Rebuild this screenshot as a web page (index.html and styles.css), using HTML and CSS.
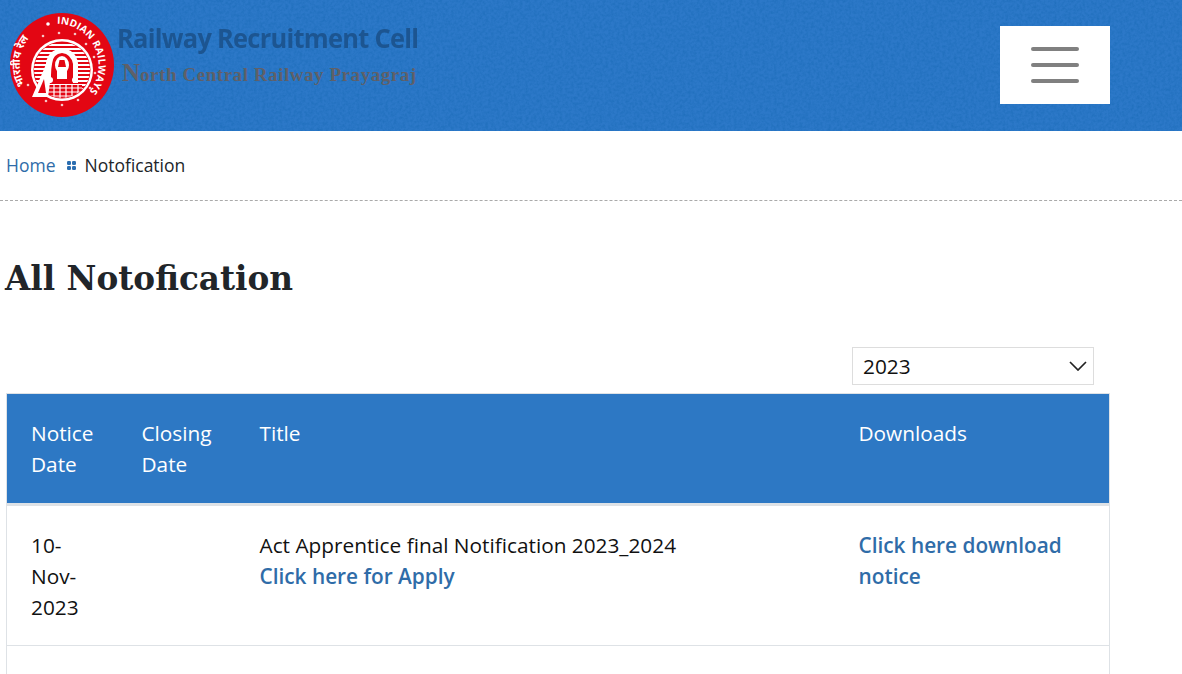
FILE: index.html
```html
<!DOCTYPE html>
<html lang="en">
<head>
    <meta charset="UTF-8">
    <meta name="viewport" content="width=device-width, initial-scale=1.0">
    <title>All Notofication</title>
    <link rel="stylesheet" href="styles.css">
</head>
<body>
    <header class="site-header">
        <svg class="header-grain" aria-hidden="true">
            <filter id="grain">
                <feTurbulence type="fractalNoise" baseFrequency="0.35" numOctaves="3" seed="4"/>
                <feColorMatrix type="matrix" values="0 0 0 0 0  0 0 0 0 0.1  0 0 0 0 0.35  0.5 0 0 0 -0.17"/>
            </filter>
            <rect width="100%" height="100%" filter="url(#grain)"/>
        </svg>

        <a class="brand" href="#">
            <svg class="brand-logo" viewBox="0 0 104 104" width="104" height="104" aria-hidden="true">
                <defs>
                    <path id="ringRight" d="M47 10.8 A41.5 41.5 0 0 1 52 93.5"/>
                    <path id="ringLeft" d="M15 72 A42 42 0 0 1 46 10"/>
                    <clipPath id="innerClip"><circle cx="52" cy="57" r="28"/></clipPath>
                </defs>
                <circle cx="52" cy="52" r="52" fill="#e30613"/>
                <text class="logo-ring"><textPath href="#ringRight">INDIAN RAILWAYS</textPath></text>
                <text class="logo-ring-hi"><textPath href="#ringLeft">भारतीय रेल</textPath></text>
                <circle cx="38" cy="11" r="1.8" fill="#fff"/>

                <!-- dots round the inner ring -->
                <g fill="#f7c6c6">
                    <circle cx="33" cy="23" r="1.3"/><circle cx="49" cy="20" r="1.3"/><circle cx="65" cy="21" r="1.3"/>
                    <circle cx="76" cy="31" r="1.3"/><circle cx="84" cy="44" r="1.3"/><circle cx="85" cy="60" r="1.3"/>
                    <circle cx="80" cy="75" r="1.3"/><circle cx="68" cy="87" r="1.3"/><circle cx="52" cy="92" r="1.3"/>
                    <circle cx="36" cy="88" r="1.3"/><circle cx="18" cy="72" r="1.3"/>
                </g>

                <circle cx="52" cy="57" r="31" fill="#fff"/>
                <circle cx="52" cy="57" r="28.5" fill="#e30613"/>
                <g clip-path="url(#innerClip)">
                    <path d="M22 32h60M22 36h60M22 40h60M22 44h60M22 48h60M22 52h60M22 56h60M22 60h60M22 64h60M22 68h60M22 72h60M22 76h60M22 80h60M22 84h60" stroke="#fff" stroke-width="2.2"/>
                    <rect x="38" y="72" width="34" height="14" fill="#e30613"/>
                    <path d="M38 75h34M38 79h34M38 83h34M44 72v14M50 72v14M56 72v14M62 72v14M68 72v14" stroke="#fff" stroke-width="1.2"/>
                    <!-- boiler arc round the emblem -->
                    <path d="M36 70 V50 Q38 37 52 35 Q66 37 68 50 V70" fill="#fff"/>
                    <path d="M41 70 V51 Q43 41 52 40 Q61 41 63 51 V70 Z" fill="#e30613"/>
                    <ellipse cx="52" cy="52" rx="7" ry="9" fill="#fff"/>
                    <path d="M47 66 V58 H57 V66 Z" fill="#fff"/>
                    <path d="M49.5 47 H54.5 L56 54 H48 Z" fill="#e30613"/>
                    <circle cx="40" cy="67" r="3" fill="#fff"/><circle cx="65" cy="67" r="3" fill="#fff"/>
                </g>
                <!-- front of the engine, runs over the ring -->
                <path d="M22 84 L34 56 Q38 44 46 37 Q41 50 41 62 L38 84 Z" fill="#fff"/>
                <path d="M28 80 L34 66 L36 80 Z" fill="#e30613"/>
            </svg>
            <span class="brand-text">
                <span class="brand-title">Railway Recruitment Cell</span>
                <span class="brand-sub"><span class="brand-initial">N</span>orth Central Railway Prayagraj</span>
            </span>
        </a>

        <button class="menu-btn" type="button" aria-label="Menu">
            <span class="menu-bar"></span>
            <span class="menu-bar"></span>
            <span class="menu-bar"></span>
        </button>
    </header>

    <nav class="breadcrumb">
        <a href="#">Home</a>
        <svg class="crumb-sep" viewBox="0 0 9 9" width="9" height="9" aria-hidden="true">
            <rect x="0" y="0" width="4" height="4" rx="1.2"/><rect x="5" y="0" width="4" height="4" rx="1.2"/>
            <rect x="0" y="5" width="4" height="4" rx="1.2"/><rect x="5" y="5" width="4" height="4" rx="1.2"/>
        </svg>
        <span>Notofication</span>
    </nav>

    <main class="content">
        <h1>All Notofication</h1>

        <div class="year-filter">
            <select class="year-select">
                <option>2023</option>
                <option>2022</option>
                <option>2021</option>
            </select>
        </div>

        <table class="notice-table">
            <thead>
                <tr>
                    <th class="col-notice">Notice Date</th>
                    <th class="col-closing">Closing Date</th>
                    <th class="col-title">Title</th>
                    <th class="col-downloads">Downloads</th>
                </tr>
            </thead>
            <tbody>
                <tr>
                    <td>10-Nov-2023</td>
                    <td></td>
                    <td>Act Apprentice final Notification 2023_2024<br><a href="#">Click here for Apply</a></td>
                    <td><a href="#">Click here download notice</a></td>
                </tr>
                <tr class="row-empty">
                    <td></td>
                    <td></td>
                    <td></td>
                    <td></td>
                </tr>
            </tbody>
        </table>
    </main>
</body>
</html>
```

FILE: styles.css
```css
* {
    margin: 0;
    padding: 0;
    box-sizing: border-box;
}

html {
    overflow: hidden;
}

body {
    font-family: "Open Sans", sans-serif;
    font-size: 20.8px;
    line-height: 31px;
    color: #212529;
    background: white;
}

a {
    color: #2f6ca8;
    text-decoration: none;
}

.site-header {
    position: relative;
    height: 131px;
    background: #2c78c8;
    display: flex;
    align-items: flex-start;
    justify-content: space-between;
    padding: 13px 72px 0 10px;
}

.header-grain {
    position: absolute;
    inset: 0;
    width: 100%;
    height: 100%;
}

.brand {
    position: relative;
    display: flex;
    align-items: flex-start;
    gap: 4px;
}

.brand-logo {
    flex: none;
}

.brand-text {
    display: flex;
    flex-direction: column;
    padding-top: 7px;
}

.brand-title {
    font-family: "Open Sans", sans-serif;
    font-size: 27px;
    font-weight: 700;
    line-height: 36px;
    color: #1c5591;
    letter-spacing: -0.75px;
    margin-left: -1px;
    transform: scaleX(0.94);
    transform-origin: left;
    white-space: nowrap;
}

.brand-sub {
    font-family: "Liberation Serif", serif;
    font-size: 19px;
    font-weight: 700;
    line-height: 34px;
    color: #5f6068;
    letter-spacing: 0.55px;
    padding-left: 4px;
    white-space: nowrap;
}

.brand-initial {
    font-size: 25px;
    letter-spacing: 0;
}

.logo-ring {
    font-family: "Open Sans", sans-serif;
    font-size: 10px;
    font-weight: 700;
    fill: #fff;
    letter-spacing: 0.2px;
}

.logo-ring-hi {
    font-family: "Noto Sans", "Noto Sans CJK SC", sans-serif;
    font-size: 11px;
    font-weight: 700;
    fill: #fff;
}

.menu-btn {
    position: relative;
    width: 110px;
    height: 78px;
    margin-top: 13px;
    background: white;
    border: none;
    display: flex;
    flex-direction: column;
    align-items: center;
    justify-content: center;
    gap: 12px;
}

.menu-bar {
    display: block;
    width: 48px;
    height: 4px;
    border-radius: 2px;
    background: #808080;
}

.breadcrumb {
    height: 70px;
    border-bottom: 1px dashed #aaa;
    padding: 21px 0 0 6px;
    display: flex;
    align-items: flex-start;
    gap: 9px;
    font-size: 17.5px;
    line-height: 26px;
}

.crumb-sep {
    margin: 9px -1px 0 3px;
    fill: #2a6db0;
}

.content {
    padding: 0 0 0 6px;
    width: 1110px;
}

h1 {
    font-family: "DejaVu Serif", serif;
    font-size: 32.7px;
    font-weight: 700;
    line-height: 44px;
    margin: 56px 0 46px -1px;
    color: #212529;
}

.year-filter {
    display: flex;
    justify-content: flex-end;
    padding-right: 16px;
    margin-bottom: 8px;
}

.year-select {
    appearance: none;
    width: 242px;
    height: 38px;
    padding: 0 10px;
    font-family: "Open Sans", sans-serif;
    font-size: 20.8px;
    color: #111;
    background: white url("data:image/svg+xml,%3Csvg xmlns='http://www.w3.org/2000/svg' width='18' height='10'%3E%3Cpath d='M1 1l8 8 8-8' fill='none' stroke='%23222' stroke-width='1.7'/%3E%3C/svg%3E") no-repeat right 6px center;
    border: 1px solid #ddd;
    border-radius: 0;
}

.notice-table {
    width: 100%;
    table-layout: fixed;
    border-collapse: collapse;
    border: 1px solid #dee2e6;
}

.notice-table th,
.notice-table td {
    padding: 24px 24px 23px;
    text-align: left;
    vertical-align: top;
    font-weight: 400;
}

.notice-table th {
    background: #2d78c4;
    color: white;
    border-bottom: 3px solid #dee2e6;
}

.notice-table td {
    line-height: 30.8px;
    color: #111;
    border-bottom: 1px solid #dee2e6;
}

.notice-table td a {
    font-weight: 600;
}

.col-notice {
    width: 111px;
}

.col-closing {
    width: 118px;
}

.col-title {
    width: 599px;
}

.row-empty td {
    height: 120px;
}
```
